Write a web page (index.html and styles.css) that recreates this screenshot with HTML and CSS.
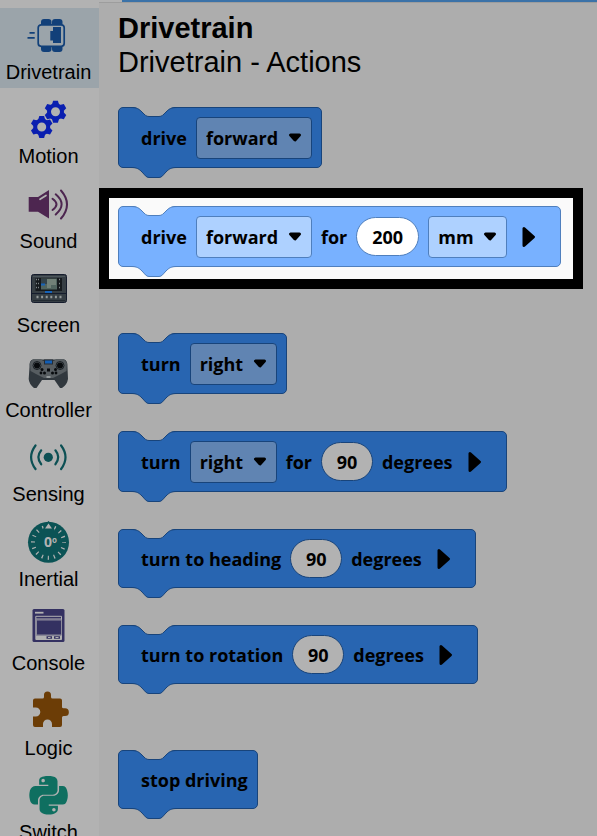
FILE: index.html
```html
<!DOCTYPE html>
<html lang="en">
<head>
<meta charset="utf-8">
<title>Drivetrain - Actions</title>
<link rel="stylesheet" href="styles.css">
</head>
<body>
<svg class="defs" aria-hidden="true">
  <symbol id="notch" viewBox="0 0 46 12">
    <path class="cut" d="M0 0H46V1C40 1 38 3 35 6C32 9 31 10.500 28 10.500H18C15 10.500 14 9 11 6C8 3 6 1 0 1Z"/>
    <path class="edge" d="M0 1.500C6 1.500 8 3 11 6C14 9 15 10.500 18 10.500H28C31 10.500 32 9 35 6C38 3 40 1.500 46 1.500"/>
  </symbol>
  <symbol id="tab" viewBox="0 0 46 12">
    <path class="fill" d="M0 0H46V.500C40 .500 38 2 35 5C32 8 31 10.500 28 10.500H18C15 10.500 14 8 11 5C8 2 6 .500 0 .500Z"/>
    <path class="edge" d="M0 .500C6 .500 8 2 11 5C14 8 15 10.500 18 10.500H28C31 10.500 32 8 35 5C38 2 40 .500 46 .500"/>
  </symbol>
  <symbol id="caret" viewBox="0 0 14 10"><path d="M2.500 2H11.500L7 7Z" stroke="#000" stroke-width="3" stroke-linejoin="round"/></symbol>
  <symbol id="more" viewBox="0 0 16 24"><path d="M3 3.500V20.500L12.500 12Z" stroke="#000" stroke-width="3" stroke-linejoin="round"/></symbol>
</svg>
<div class="topbar"><div class="topbar-tab"></div></div>
<div class="layout">
  <nav class="sidebar" aria-label="Block categories">
    <ul>
      <li><a class="category selected" href="#drivetrain">
        <svg viewBox="0 -2 45 42"><g fill="#124079"><rect x="15" y="3" width="10.500" height="8" rx="3"/><rect x="26" y="3" width="10.500" height="8" rx="3"/><rect x="15" y="28" width="10.500" height="8" rx="3"/><rect x="26" y="28" width="10.500" height="8" rx="3"/></g><rect x="12.200" y="8.800" width="26" height="21.500" rx="3" fill="#9ba4aa" stroke="#124079" stroke-width="1.700"/><path d="M27 11H35V27H27V24.500H24.300V15H27Z" fill="#124079"/><path d="M3.500 16.800H8.700M1.500 21.800H8.700" stroke="#124079" stroke-width="1.700"/></svg>
        <span>Drivetrain</span></a></li>
      <li><a class="category" href="#motion">
        <svg viewBox="0 -2 45 42"><defs><g id="gear"><circle r="6.500" fill="none" stroke="#0a1fb0" stroke-width="4"/><g id="teeth" fill="#0a1fb0"><path id="tooth" d="M-3.600 -7L-2.400 -11H2.400L3.600 -7Z"/><use href="#tooth" transform="rotate(60)"/><use href="#tooth" transform="rotate(120)"/><use href="#tooth" transform="rotate(180)"/><use href="#tooth" transform="rotate(240)"/><use href="#tooth" transform="rotate(300)"/></g></g></defs><use href="#gear" x="29.500" y="11.700"/><use href="#gear" x="15.700" y="27"/></svg>
        <span>Motion</span></a></li>
      <li><a class="category" href="#sound">
        <svg viewBox="0 -2 45 42"><path d="M2.700 12H12L23 5V33.500L12 26.700H2.700Z" fill="#4d2650"/><path d="M14 14.300L20 10.500" stroke="#b2b2b2" stroke-width="1.700" stroke-linecap="round"/><g fill="none" stroke="#4d2650" stroke-width="2" stroke-linecap="round"><path d="M26.500 13.700Q34.500 19.300 26.500 25"/><path d="M29.700 9.300Q41.500 19.300 29.700 29.500"/><path d="M35 5.500Q47 19.300 35 33.500"/></g></svg>
        <span>Sound</span></a></li>
      <li><a class="category" href="#screen">
        <svg viewBox="0 -2 45 42"><rect x="5.500" y="5.500" width="35" height="28" rx="2" fill="#363e44" stroke="#151c2d"/><path d="M6 24.500H40" stroke="#151c2d"/><path d="M7 7.500H39" stroke="#4c565c"/><rect x="9.500" y="9" width="26.500" height="13" fill="#15191d"/><path d="M10 10.500h3M10 14.500h3M10 18.500h3M33 10.500h2M33 14.500h2M33 18.500h2" stroke="#7e8588" stroke-width="1.500" stroke-dasharray="1 1"/><rect x="15" y="9.500" width="16" height="11" fill="#50645f"/><path d="M15 10h6v5h-6z" fill="#33424a"/><path d="M21 10h9v6h-5v3h-4z" fill="#718078"/><path d="M15 15.500h4M19 23h7" stroke="#1763b8" stroke-width="2"/><path d="M10.500 28H37" stroke="#939999" stroke-width="2.500" stroke-dasharray="2 2.600"/><path d="M7 31.500H39" stroke="#222a32"/></svg>
        <span>Screen</span></a></li>
      <li><a class="category" href="#controller">
        <svg viewBox="0 -2 45 42"><path d="M7 5.500H38Q42 6 41.500 14L42 25Q41 31 36 34H34L28.500 26H16L10.500 34H8Q3 30 2.700 25L3.500 13Q3 6 7 5.500Z" fill="#31383e"/><path d="M7 5H15L17 7H28L30 5H38L41 9L40.500 17L35 20L27 24H18L10 20L4.500 17L4 9Z" fill="#575d61"/><rect x="18.500" y="6" width="8" height="4" fill="#125eb5" stroke="#262d34"/><g fill="#080b0e"><circle cx="11" cy="11.500" r="3"/><circle cx="34" cy="11.500" r="3"/><circle cx="16" cy="15.500" r="1.500"/><circle cx="15" cy="19" r="1.400"/><circle cx="18.500" cy="19" r="1.500"/><circle cx="29.500" cy="15.500" r="1.500"/><circle cx="30" cy="19" r="1.400"/><circle cx="26.500" cy="19" r="1.500"/><rect x="21" y="14.500" width="3" height="3"/></g><g fill="none" stroke="#1a2025"><circle cx="11" cy="11.500" r="4"/><circle cx="34" cy="11.500" r="4"/></g><path d="M20.500 23h4" stroke="#92989a" stroke-width="2"/></svg>
        <span>Controller</span></a></li>
      <li><a class="category" href="#sensing">
        <svg viewBox="0 -2 45 42"><circle cx="22.300" cy="19.300" r="4.600" fill="#0c5054"/><g fill="none" stroke="#0c5054" stroke-width="2.200" stroke-linecap="round"><path d="M15.200 12.300Q9.500 19.300 15.200 26.300M29.400 12.300Q35.100 19.300 29.400 26.300"/><path d="M9.500 7.500Q.700 19.300 9.500 31M35.100 7.500Q43.900 19.300 35.100 31"/></g></svg>
        <span>Sensing</span></a></li>
      <li><a class="category" href="#inertial">
        <svg viewBox="0 -2 45 42"><circle cx="22.500" cy="19.300" r="20.500" fill="#0b5355"/><circle cx="22.500" cy="19.300" r="15.500" fill="none" stroke="#b2b2b2" stroke-width="4" stroke-dasharray="1.200 4.887" stroke-dashoffset=".600"/><path d="M19 5.500L22.500 .500L26 5.500Z" fill="#b2b2b2" stroke="#0b5355" stroke-width="3" paint-order="stroke"/><text x="18" y="24.300" class="dial">0</text><text x="26" y="20" class="dial dial-unit">o</text></svg>
        <span>Inertial</span></a></li>
      <li><a class="category" href="#console">
        <svg viewBox="0 -2 45 42"><rect x="6.500" y="2" width="32" height="33" rx="1.500" fill="#343161"/><path d="M9 5.700H17.500" stroke="#b2b2b2" stroke-width="1.800"/><path d="M9.800 32.500V9.300H35.500V32.500ZM10 12H35.500" fill="none" stroke="#b2b2b2"/><rect x="10.500" y="13" width="25" height="15" fill="#343161" stroke="#8d8c9b"/><path d="M10 30.500H35.500" stroke="#b2b2b2" stroke-width="4"/><path d="M20.500 30.500H26M28 30.500H34" stroke="#343161" stroke-width="2.500"/><path d="M22 30.500h2.500M29.500 30.500h3" stroke="#b2b2b2"/></svg>
        <span>Console</span></a></li>
      <li><a class="category" href="#logic">
        <svg viewBox="0 -2 45 42"><path d="M9 6.500H16.500Q18 6.500 18 5V3A3.500 3.500 0 0 1 25 3V5Q25 6.500 26.500 6.500H34Q36 6.500 36 8.500V15Q36 16.300 37.500 16.300H39A3.800 3.800 0 0 1 39 24H37.500Q36 24 36 25.500V33Q36 35 34 35H26V32A4.500 4.500 0 0 0 17 32V35H9Q7 35 7 33V24.500H9.800A4.400 4.400 0 0 0 9.800 15.500H7V8.500Q7 6.500 9 6.500Z" fill="#6c3d06"/></svg>
        <span>Logic</span></a></li>
      <li><a class="category" href="#switch">
        <svg viewBox="0 -2 45 42"><path transform="translate(3.300 -2.700) scale(.086)" fill="#0f6f60" d="M439.800 200.500c-7.700-30.900-22.300-54.200-53.400-54.200h-40.100v47.400c0 36.800-31.200 67.800-66.800 67.800H172.700c-29.200 0-53.400 25-53.400 54.300v101.800c0 29 25.200 46 53.400 54.300 33.800 9.900 66.300 11.700 106.800 0 26.900-7.800 53.400-23.500 53.400-54.300v-40.700H226.200v-13.600h160.200c31.100 0 42.600-21.700 53.400-54.200 11.200-33.500 10.700-65.700 0-108.600zM286.200 404c11.100 0 20.100 9.100 20.100 20.300 0 11.300-9 20.400-20.100 20.400-11 0-20.100-9.200-20.100-20.400.1-11.300 9.100-20.300 20.100-20.300zM167.800 248.100h106.800c29.700 0 53.400-24.500 53.400-54.300V91.900c0-29-24.400-50.700-53.400-55.600-35.800-5.900-74.700-5.600-106.800.1-45.200 8-53.400 24.700-53.400 55.600v40.700h106.900v13.600h-147c-31.100 0-58.300 18.700-66.800 54.200-9.800 40.700-10.200 66.100 0 108.600 7.600 31.600 25.700 54.200 56.800 54.200H101v-48.800c0-35.300 30.500-66.400 66.800-66.400zm-6.700-142.600c-11.100 0-20.100-9.100-20.100-20.300.1-11.300 9-20.400 20.100-20.400 11 0 20.100 9.200 20.100 20.400s-9 20.300-20.100 20.300z"/></svg>
        <span>Switch</span></a></li>
    </ul>
  </nav>
  <main class="palette">
    <h1>Drivetrain</h1>
    <h2>Drivetrain - Actions</h2>

    <div class="block tall">
      <svg class="notch"><use href="#notch"/></svg><svg class="tab"><use href="#tab"/></svg>
      <span>drive</span>
      <span class="pick"><select aria-label="Drive direction"><option>forward</option></select><svg><use href="#caret"/></svg></span>
    </div>

    <div class="highlight">
      <div class="block tall">
        <svg class="notch"><use href="#notch"/></svg><svg class="tab"><use href="#tab"/></svg>
        <span>drive</span>
        <span class="pick"><select aria-label="Drive for direction"><option>forward</option></select><svg><use href="#caret"/></svg></span>
        <span>for</span>
        <input class="wide" type="text" value="200" aria-label="Distance">
        <span class="pick"><select aria-label="Distance unit"><option>mm</option></select><svg><use href="#caret"/></svg></span>
        <button type="button" aria-label="Expand drive for"><svg><use href="#more"/></svg></button>
      </div>
    </div>

    <div class="block tall">
      <svg class="notch"><use href="#notch"/></svg><svg class="tab"><use href="#tab"/></svg>
      <span>turn</span>
      <span class="pick"><select aria-label="Turn direction"><option>right</option></select><svg><use href="#caret"/></svg></span>
    </div>

    <div class="block tall">
      <svg class="notch"><use href="#notch"/></svg><svg class="tab"><use href="#tab"/></svg>
      <span>turn</span>
      <span class="pick"><select aria-label="Turn for direction"><option>right</option></select><svg><use href="#caret"/></svg></span>
      <span>for</span>
      <input type="text" value="90" aria-label="Turn angle">
      <span>degrees</span>
      <button type="button" aria-label="Expand turn for"><svg><use href="#more"/></svg></button>
    </div>

    <div class="block">
      <svg class="notch"><use href="#notch"/></svg><svg class="tab"><use href="#tab"/></svg>
      <span>turn to heading</span>
      <input type="text" value="90" aria-label="Heading">
      <span>degrees</span>
      <button type="button" aria-label="Expand turn to heading"><svg><use href="#more"/></svg></button>
    </div>

    <div class="block group-end">
      <svg class="notch"><use href="#notch"/></svg><svg class="tab"><use href="#tab"/></svg>
      <span>turn to rotation</span>
      <input type="text" value="90" aria-label="Rotation">
      <span>degrees</span>
      <button type="button" aria-label="Expand turn to rotation"><svg><use href="#more"/></svg></button>
    </div>

    <div class="block">
      <svg class="notch"><use href="#notch"/></svg><svg class="tab"><use href="#tab"/></svg>
      <span>stop driving</span>
    </div>
  </main>
</div>
</body>
</html>
```
FILE: styles.css
```css
* { box-sizing: border-box; }

body {
  --panel: #adadad;
  --block: #2865b1;
  --edge: #18447b;
  --field: #6084b2;
  --input: #b2b2b2;
  margin: 0;
  height: 100vh;
  display: flex;
  flex-direction: column;
  overflow: hidden;
  background: #b2b2b2;
  color: #000;
  font-family: "Liberation Sans", Arial, sans-serif;
}

.defs { position: absolute; width: 0; height: 0; }

.topbar { flex: none; height: 2px; padding-left: 122px; }
.topbar-tab { height: 2px; background: #3b72a8; }

.layout { flex: 1; min-height: 0; display: flex; }

.sidebar { flex: none; width: 99px; padding-top: 6px; overflow: hidden; }
.sidebar ul { margin: 0; padding: 0; list-style: none; }
.sidebar li { margin-bottom: 4px; }
.sidebar li:nth-child(even) { margin-bottom: 5px; }

.category {
  display: flex;
  flex-direction: column;
  align-items: center;
  gap: 4px;
  height: 80px;
  padding: 6px 2px 0 0;
  color: #000;
  font-size: 20px;
  line-height: 24px;
  text-decoration: none;
}
.category.selected { background: #9ba4aa; }
.category svg { flex: none; width: 45px; height: 42px; }
.dial { font: bold 14px "Open Sans", sans-serif; fill: #b2b2b2; }
.dial-unit { font-size: 8px; }

.palette {
  flex: 1;
  min-width: 0;
  padding: 8px 0 0 19px;
  border-top: 1px solid #9d9d9d;
  background: var(--panel);
  overflow: hidden;
}

h1, h2 { margin: 0; font-size: 29px; line-height: 34px; }
h2 { margin-bottom: 28px; font-weight: 400; }

.block {
  position: relative;
  display: flex;
  align-items: center;
  gap: 9px;
  width: fit-content;
  height: 59px;
  margin-bottom: 37px;
  padding: 0 9px 0 22px;
  border: 1px solid var(--edge);
  border-radius: 5px;
  background: var(--block);
  font: bold 18px/24px "Open Sans", "Noto Sans", sans-serif;
  white-space: nowrap;
}
.block.tall { height: 61px; }
.block.group-end { margin-bottom: 66px; }

.notch, .tab { position: absolute; left: 12px; width: 46px; height: 12px; }
.notch { top: -2px; }
.tab { top: 100%; }
.cut { fill: var(--panel); }
.fill { fill: var(--block); }
.edge { fill: none; stroke: var(--edge); }

.pick { position: relative; display: flex; }
.pick svg {
  position: absolute;
  right: 10px;
  top: 16px;
  width: 14px;
  height: 10px;
  pointer-events: none;
}
select {
  appearance: none;
  height: 42px;
  margin: 0;
  padding: 0 32px 0 9px;
  border: 1px solid var(--edge);
  border-radius: 4px;
  background: var(--field);
  color: #000;
  font: inherit;
}

.block input {
  width: 52px;
  height: 39px;
  padding: 0;
  border: 1px solid var(--edge);
  border-radius: 20px;
  background: var(--input);
  color: #000;
  font: inherit;
  text-align: center;
}
.block .wide { width: 63px; }

button {
  display: flex;
  width: 25px;
  margin: 0 5px;
  padding: 0;
  border: 0;
  background: none;
}
button svg { width: 16px; height: 24px; }

.highlight {
  --panel: #fafafa;
  --block: #78b1ff;
  --edge: #4f7fbd;
  --field: #aed1ff;
  --input: #fff;
  width: fit-content;
  margin: -17px 0 44px -19px;
  padding: 8px 12px 12px 9px;
  border: 10px solid #000;
  background: var(--panel);
}
.highlight .block.tall { margin-bottom: 0; }
```
